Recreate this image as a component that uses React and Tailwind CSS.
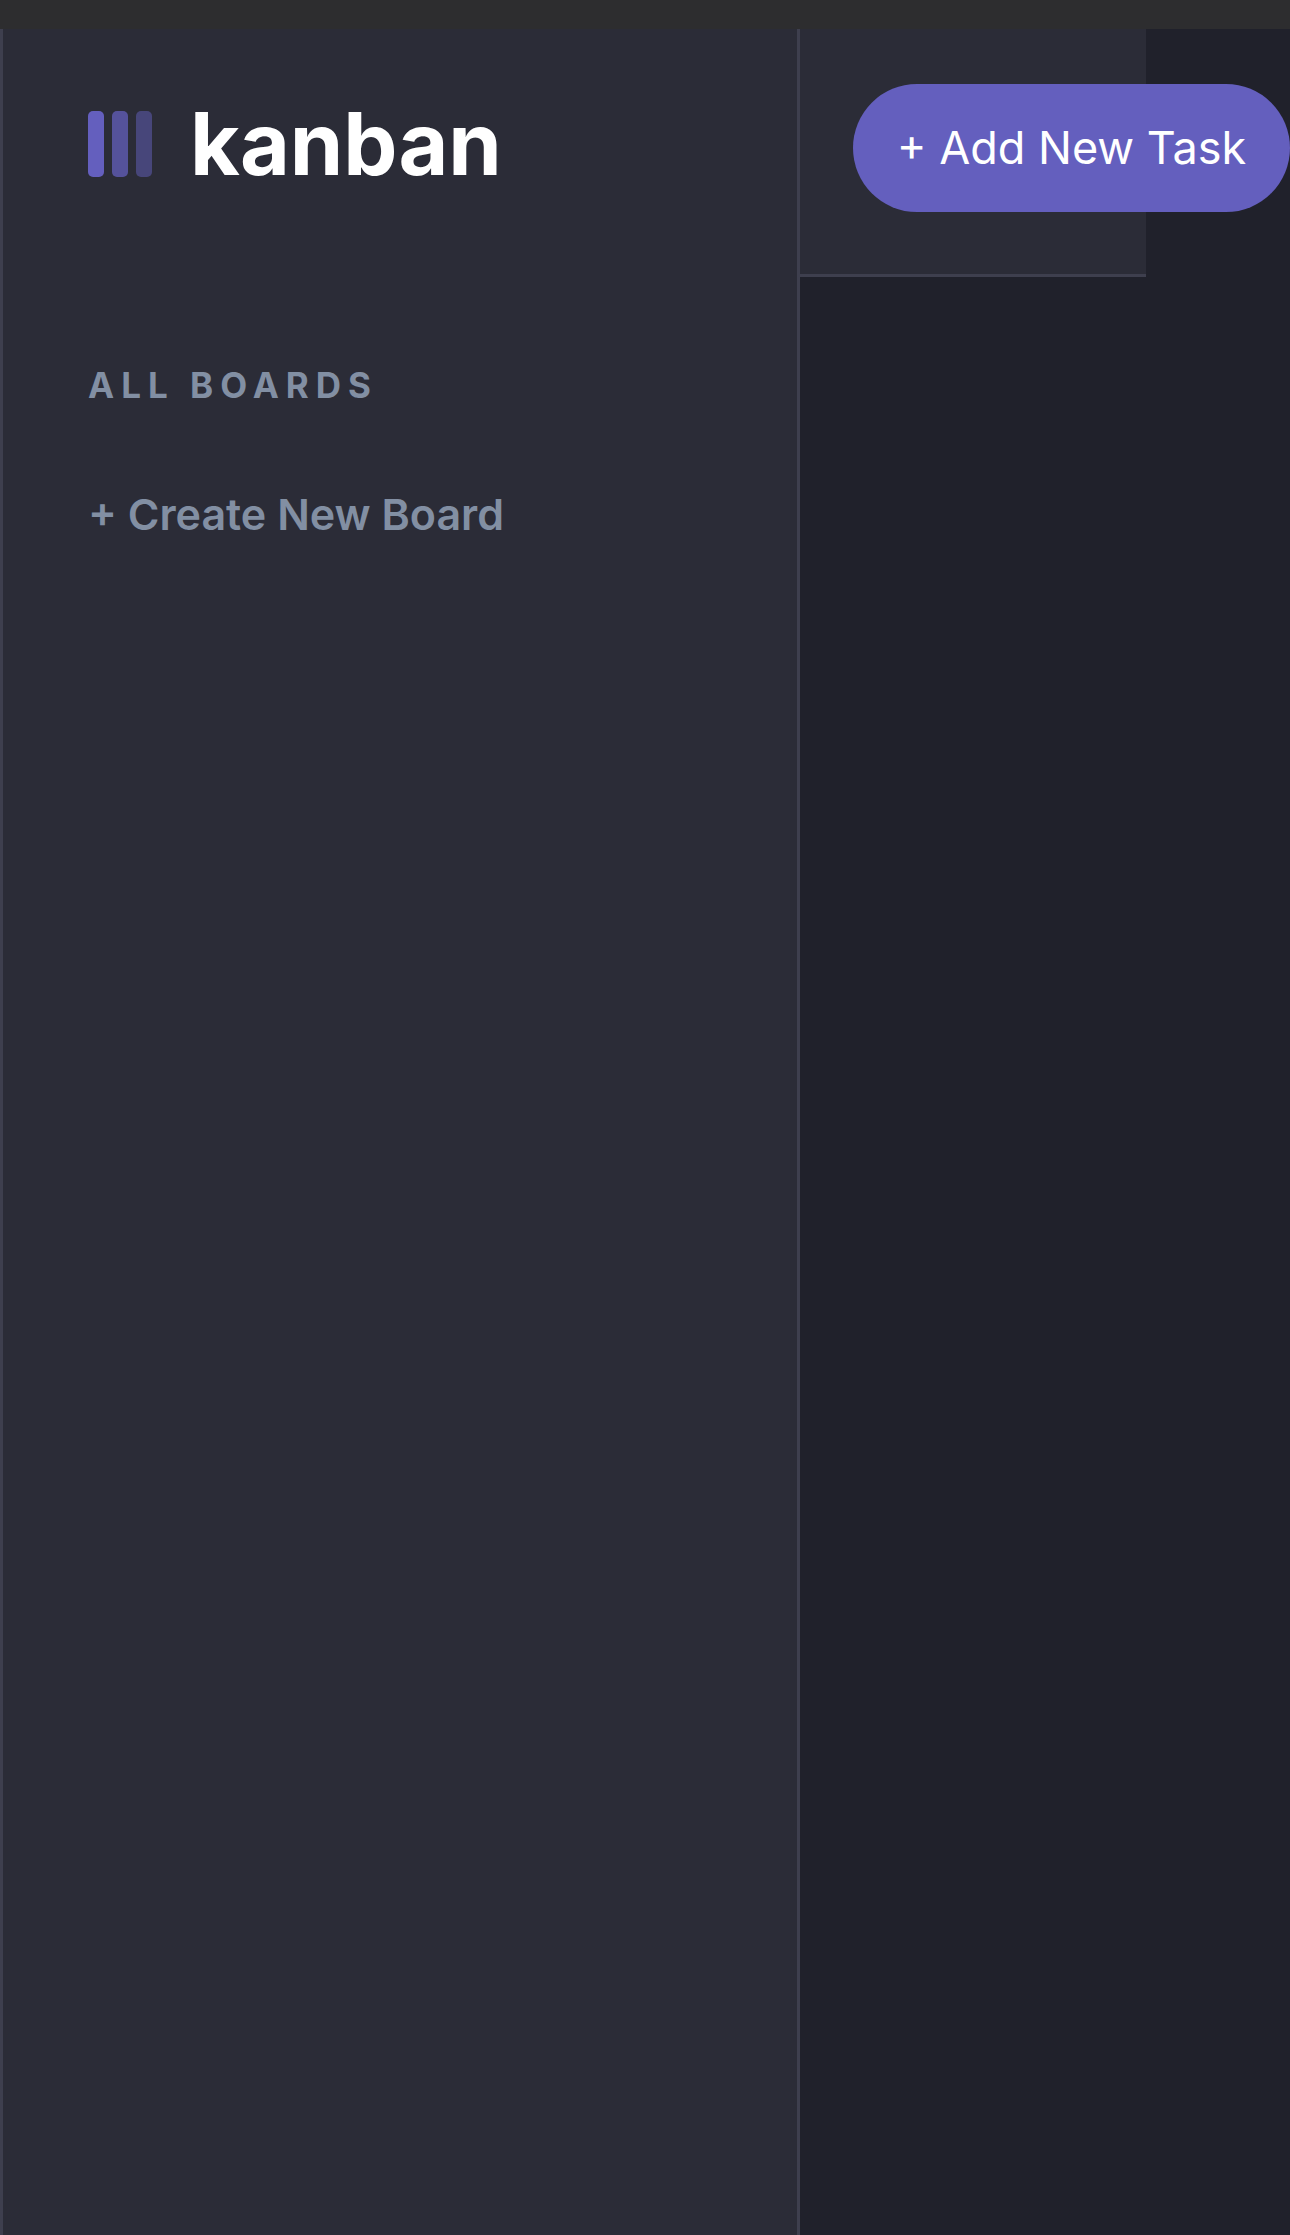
function LogoMark() {
  return (
    <svg width="64" height="66" viewBox="0 0 64 66" fill="#645FBE" aria-hidden="true">
      <rect width="16" height="66" rx="5" />
      <rect x="24" width="16" height="66" rx="5" opacity="0.75" />
      <rect x="48" width="16" height="66" rx="5" opacity="0.5" />
    </svg>
  );
}

function Sidebar() {
  return (
    <aside className="w-[62%] shrink-0 border-x-3 border-[#3e3f4e] bg-[#2b2c37] px-[85px] pt-[70px]">
      <div className="flex items-center gap-[38px]">
        <LogoMark />
        <span className="text-[86px] leading-[90px] font-bold text-white">kanban</span>
      </div>
      <h2 className="mt-[172px] text-[35px] leading-12 font-bold tracking-[7px] whitespace-nowrap text-[#828fa3]">
        ALL BOARDS
      </h2>
      <button
        type="button"
        className="mt-[75px] block text-[43px] leading-[60px] font-semibold whitespace-nowrap text-[#828fa3]"
      >
        + Create New Board
      </button>
    </aside>
  );
}

function Header() {
  return (
    <header className="flex w-[346px] items-start border-b-3 border-[#3e3f4e] bg-[#2b2c37] pt-[55px] pb-[62px] pl-[53px]">
      <button
        type="button"
        className="h-32 shrink-0 rounded-full bg-[#645fbe] px-11 text-[45px] leading-[60px] whitespace-nowrap text-white"
      >
        + Add New Task
      </button>
    </header>
  );
}

export default function App() {
  return (
    <div className="flex min-h-screen flex-col overflow-x-hidden bg-[#20212b] font-['Inter',sans-serif]">
      <div className="h-[29px] shrink-0 bg-[#2d2d2f]" />
      <div className="flex flex-1">
        <Sidebar />
        <main className="min-w-0 flex-1">
          <Header />
        </main>
      </div>
    </div>
  );
}
